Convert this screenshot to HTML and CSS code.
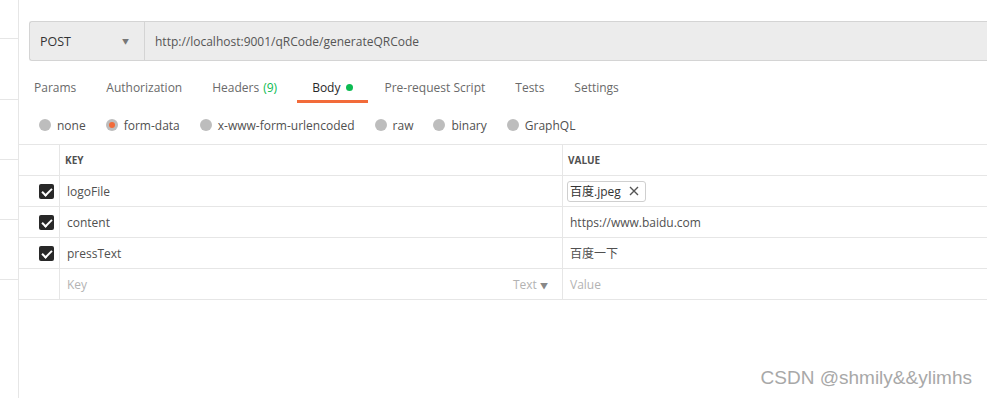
FILE: index.html
```html
<!DOCTYPE html>
<html lang="en">
  <head>
    <meta charset="UTF-8" />
    <title>Postman - generateQRCode</title>
    <link rel="stylesheet" href="styles.css">
  </head>
  <body>
    <div class="app">
      <div class="sidebar">
        <div class="side-item first"></div>
        <div class="side-item"></div>
        <div class="side-item"></div>
        <div class="side-item"></div>
        <div class="side-item"></div>
      </div>

      <div class="main">
        <div class="url-bar">
          <div class="method">
            <span>POST</span>
            <span class="caret">&#9660;</span>
          </div>
          <div class="url">http://localhost:9001/qRCode/generateQRCode</div>
        </div>

        <div class="tabs">
          <div class="tab">Params</div>
          <div class="tab">Authorization</div>
          <div class="tab">Headers <span class="count">(9)</span></div>
          <div class="tab active">Body <span class="dot"></span></div>
          <div class="tab">Pre-request Script</div>
          <div class="tab">Tests</div>
          <div class="tab">Settings</div>
        </div>

        <div class="body-types">
          <label class="radio"><span class="circle"></span>none</label>
          <label class="radio checked"><span class="circle"></span>form-data</label>
          <label class="radio"><span class="circle"></span>x-www-form-urlencoded</label>
          <label class="radio"><span class="circle"></span>raw</label>
          <label class="radio"><span class="circle"></span>binary</label>
          <label class="radio"><span class="circle"></span>GraphQL</label>
        </div>

        <div class="params">
          <div class="row head">
            <div class="cell check"></div>
            <div class="cell key">KEY</div>
            <div class="cell value">VALUE</div>
          </div>
          <div class="row">
            <div class="cell check"><span class="box"></span></div>
            <div class="cell key">logoFile</div>
            <div class="cell value">
              <span class="file-chip">百度.jpeg
                <svg width="10" height="10" viewBox="0 0 10 10"><path d="M1 1L9 9M9 1L1 9" stroke="#555" stroke-width="1.4"/></svg>
              </span>
            </div>
          </div>
          <div class="row">
            <div class="cell check"><span class="box"></span></div>
            <div class="cell key">content</div>
            <div class="cell value">https://www.baidu.com</div>
          </div>
          <div class="row">
            <div class="cell check"><span class="box"></span></div>
            <div class="cell key">pressText</div>
            <div class="cell value">百度一下</div>
          </div>
          <div class="row empty">
            <div class="cell check"></div>
            <div class="cell key">
              <span>Key</span>
              <span class="type">Text <span class="caret">&#9660;</span></span>
            </div>
            <div class="cell value">Value</div>
          </div>
        </div>
      </div>
    </div>

    <div class="watermark">CSDN @shmily&amp;&amp;ylimhs</div>
  </body>
</html>
```

FILE: styles.css
```css
* {
  margin: 0;
  padding: 0;
  box-sizing: border-box;
}

body {
  font-family: "Open Sans", "Noto Sans CJK SC", sans-serif;
  font-size: 12px;
  color: #505050;
  background: #fff;
  width: 987px;
  height: 398px;
  overflow: hidden;
  position: relative;
}

.app {
  display: flex;
  height: 398px;
}

.sidebar {
  width: 19px;
  flex-shrink: 0;
  border-right: 1px solid #e6e6e6;
}

.side-item {
  height: 60px;
  border-bottom: 1px solid #e6e6e6;
}

.side-item.first {
  height: 39px;
  margin-bottom: 1px;
}

.main {
  flex: 1;
  min-width: 0;
  padding-top: 21px;
}

/* request line */
.url-bar {
  display: flex;
  height: 40px;
  margin-left: 10px;
  background: #ececec;
  border: 1px solid #d4d4d4;
  border-right: none;
  border-radius: 3px 0 0 3px;
}

.method {
  width: 115px;
  display: flex;
  align-items: center;
  justify-content: space-between;
  padding: 0 15px 0 10px;
  border-right: 1px solid #d4d4d4;
  font-size: 12.5px;
  color: #333;
}

.method .caret {
  font-size: 7px;
  color: #777;
}

.url {
  display: flex;
  align-items: center;
  padding-left: 10px;
  color: #555;
}

/* tabs */
.tabs {
  display: flex;
  margin-top: 2px;
  height: 40px;
}

.tab {
  display: flex;
  align-items: center;
  padding: 12px 15px 0;
  height: 40px;
  border-bottom: 3px solid transparent;
  color: #6a6a6a;
  white-space: nowrap;
}

.tab.active {
  color: #282828;
  border-bottom-color: #f26b3a;
  margin-left: 5px;
  margin-right: 1px;
}

.count {
  color: #0cbb52;
  margin-left: 4px;
}

.dot {
  display: inline-block;
  width: 7px;
  height: 7px;
  border-radius: 50%;
  background: #0cbb52;
  margin-left: 6px;
}

/* body type radios */
.body-types {
  display: flex;
  align-items: center;
  height: 41px;
  padding: 3px 0 0 20px;
}

.radio {
  display: flex;
  align-items: center;
  margin-right: 20px;
  color: #505050;
}

.circle {
  width: 12px;
  height: 12px;
  border-radius: 50%;
  background: #bdbdbd;
  margin-right: 6px;
  display: flex;
  align-items: center;
  justify-content: center;
}

.radio.checked .circle::after {
  content: "";
  width: 6px;
  height: 6px;
  border-radius: 50%;
  background: #f26b3a;
}

/* params table */
.params {
  border-top: 1px solid #e6e6e6;
}

.row {
  display: flex;
  height: 31px;
  border-bottom: 1px solid #e6e6e6;
}

.cell {
  display: flex;
  align-items: center;
}

.cell.check {
  width: 41px;
  justify-content: flex-end;
  padding-right: 5px;
  border-right: 1px solid #e6e6e6;
}

.cell.key {
  width: 503px;
  padding-left: 7px;
  padding-right: 14px;
  border-right: 1px solid #e6e6e6;
  justify-content: space-between;
  color: #505050;
}

.cell.value {
  flex: 1;
  padding-left: 7px;
  color: #505050;
}

.row.head .cell {
  font-size: 10px;
  font-weight: 700;
  color: #505050;
  padding-left: 5px;
}

.row.head .cell.check {
  padding-left: 0;
}

.row.empty .cell {
  color: #b3b3b3;
}

.type .caret {
  font-size: 8px;
  color: #888;
}

.box {
  width: 15px;
  height: 15px;
  border-radius: 2px;
  background: #282828;
  position: relative;
}

.box::after {
  content: "";
  position: absolute;
  left: 5px;
  top: 2px;
  width: 4px;
  height: 8px;
  border: solid #fff;
  border-width: 0 2px 2px 0;
  transform: rotate(45deg);
}

.file-chip {
  display: inline-flex;
  align-items: center;
  gap: 8px;
  height: 21px;
  padding: 0 6px 0 2px;
  border: 1px solid #cfcfcf;
  border-radius: 3px;
  color: #333;
  margin-left: -3px;
}

.watermark {
  position: absolute;
  right: 15px;
  bottom: 9px;
  font-family: "Liberation Sans", Arial, sans-serif;
  font-size: 19px;
  color: #a8a8a8;
}
```
